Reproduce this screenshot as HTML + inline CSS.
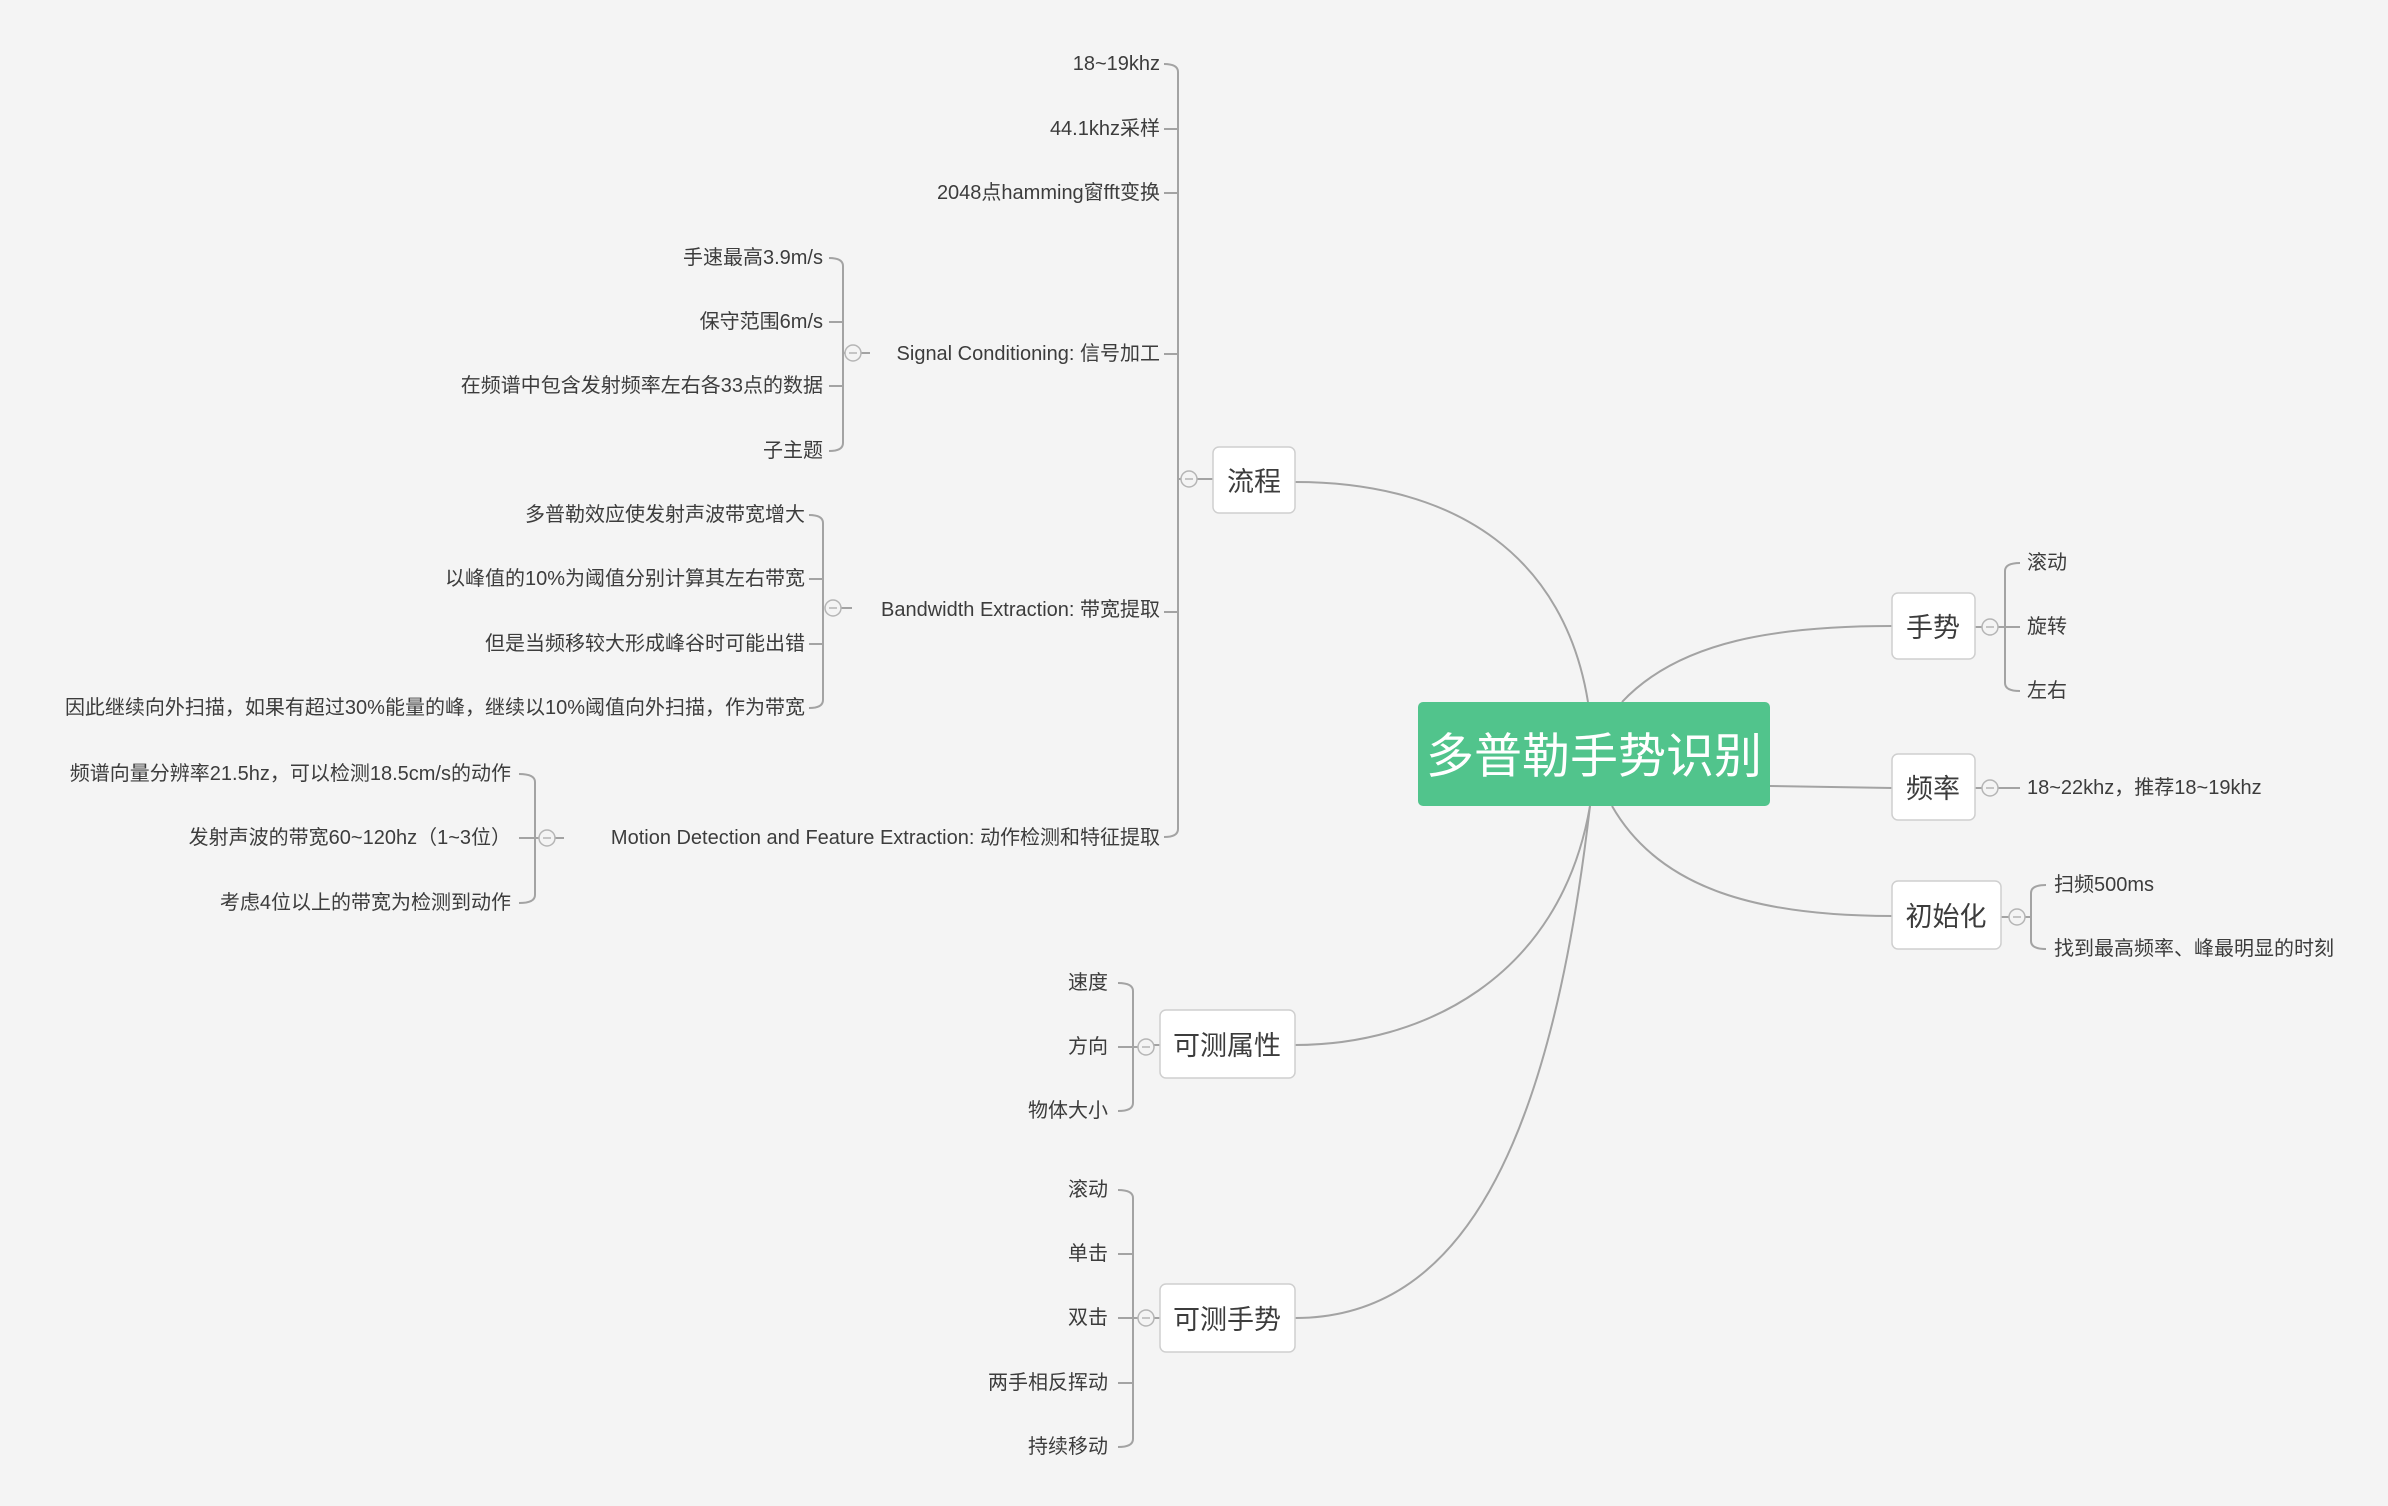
<!DOCTYPE html>
<html><head><meta charset="utf-8"><style>
html,body{margin:0;padding:0;background:#f4f4f4;}
svg{display:block;}
text{font-family:"Liberation Sans","Noto Sans CJK SC",sans-serif;fill:#3c3c3c;dominant-baseline:central;}
.l{font-size:20px;}
.n{font-size:27px;}
</style></head><body>
<svg width="2388" height="1506" viewBox="0 0 2388 1506" xmlns="http://www.w3.org/2000/svg">
<rect width="2388" height="1506" fill="#f4f4f4"/>
<g fill="none" stroke="#a3a3a3" stroke-width="2">
<!-- curves from root -->
<path d="M1295 482 C1460 482 1565 560 1588 702"/>
<path d="M1622 702 C1680 640 1780 626 1892 626"/>
<path d="M1770 786 L1892 788"/>
<path d="M1612 806 C1660 890 1760 916 1892 916"/>
<path d="M1590 806 C1560 980 1420 1045 1295 1045"/>
<path d="M1590 806 C1550 1150 1460 1318 1295 1318"/>
<!-- main 流程 bracket -->
<path d="M1164 64 Q1178 64 1178 72 L1178 829 Q1178 837 1164 837"/>
<path d="M1164 129 L1178 129 M1164 193 L1178 193 M1164 354 L1178 354 M1164 612 L1178 612"/>
<path d="M1178 479 L1181 479 M1197 479 L1213 479"/>
<!-- signal -->
<path d="M829 258 Q843 258 843 266 L843 443 Q843 451 829 451"/>
<path d="M829 322 L843 322 M829 386 L843 386 M843 353 L845 353 M861 353 L870 353"/>
<!-- bandwidth -->
<path d="M809 515 Q823 515 823 523 L823 700 Q823 708 809 708"/>
<path d="M809 579 L823 579 M809 644 L823 644 M841 608 L852 608"/>
<!-- motion -->
<path d="M519 774 Q535 774 535 782 L535 895 Q535 903 519 903"/>
<path d="M519 838 L539 838 M555 838 L564 838"/>
<!-- 可测属性 -->
<path d="M1118 983 Q1133 983 1133 991 L1133 1103 Q1133 1111 1118 1111"/>
<path d="M1118 1047 L1138 1047 M1154 1045 L1160 1045"/>
<!-- 可测手势 -->
<path d="M1118 1190 Q1133 1190 1133 1198 L1133 1439 Q1133 1447 1118 1447"/>
<path d="M1118 1254 L1133 1254 M1118 1318 L1138 1318 M1154 1318 L1160 1318 M1118 1383 L1133 1383"/>
<!-- 手势 -->
<path d="M2020 563 Q2005 563 2005 571 L2005 683 Q2005 691 2020 691"/>
<path d="M1975 627 L1982 627 M1998 627 L2020 627"/>
<!-- 频率 -->
<path d="M1975 788 L1982 788 M1998 788 L2020 788"/>
<!-- 初始化 -->
<path d="M2046 885 Q2031 885 2031 893 L2031 941 Q2031 949 2046 949"/>
<path d="M2001 917 L2009 917 M2025 917 L2031 917"/>
</g>
<!-- collapse circles -->
<g fill="#f4f4f4" stroke="#b5b5b5" stroke-width="1.5">
<circle cx="1189" cy="479" r="8"/><circle cx="853" cy="353" r="8"/><circle cx="833" cy="608" r="8"/>
<circle cx="547" cy="838" r="8"/><circle cx="1146" cy="1047" r="8"/><circle cx="1146" cy="1318" r="8"/>
<circle cx="1990" cy="627" r="8"/><circle cx="1990" cy="788" r="8"/><circle cx="2017" cy="917" r="8"/>
</g>
<g stroke="#b5b5b5" stroke-width="1.5">
<path d="M1185 479h8M849 353h8M829 608h8M543 838h8M1142 1047h8M1142 1318h8M1986 627h8M1986 788h8M2013 917h8"/>
</g>
<!-- boxes -->
<g fill="#ffffff" stroke="#cfcfcf" stroke-width="1.5">
<rect x="1213" y="447" width="82" height="66" rx="6"/>
<rect x="1892" y="593" width="83" height="66" rx="6"/>
<rect x="1892" y="754" width="83" height="66" rx="6"/>
<rect x="1892" y="881" width="109" height="68" rx="6"/>
<rect x="1160" y="1010" width="135" height="68" rx="6"/>
<rect x="1160" y="1284" width="135" height="68" rx="6"/>
</g>
<rect x="1418" y="702" width="352" height="104" rx="5" fill="#51c48c"/>
<text x="1594" y="757" text-anchor="middle" style="font-size:48px;fill:#ffffff">多普勒手势识别</text>
<g class="n" text-anchor="middle">
<text x="1254" y="482">流程</text>
<text x="1933" y="628">手势</text>
<text x="1933" y="789">频率</text>
<text x="1946" y="917">初始化</text>
<text x="1227" y="1046">可测属性</text>
<text x="1227" y="1320">可测手势</text>
</g>
<g class="l" text-anchor="end">
<text x="1160" y="64">18~19khz</text>
<text x="1160" y="129">44.1khz采样</text>
<text x="1160" y="193">2048点hamming窗fft变换</text>
<text x="1160" y="354">Signal Conditioning: 信号加工</text>
<text x="1160" y="610">Bandwidth Extraction: 带宽提取</text>
<text x="1160" y="838">Motion Detection and Feature Extraction: 动作检测和特征提取</text>
<text x="823" y="258">手速最高3.9m/s</text>
<text x="823" y="322">保守范围6m/s</text>
<text x="823" y="386">在频谱中包含发射频率左右各33点的数据</text>
<text x="823" y="451">子主题</text>
<text x="805" y="515">多普勒效应使发射声波带宽增大</text>
<text x="805" y="579">以峰值的10%为阈值分别计算其左右带宽</text>
<text x="805" y="644">但是当频移较大形成峰谷时可能出错</text>
<text x="805" y="708">因此继续向外扫描，如果有超过30%能量的峰，继续以10%阈值向外扫描，作为带宽</text>
<text x="511" y="774">频谱向量分辨率21.5hz，可以检测18.5cm/s的动作</text>
<text x="511" y="838">发射声波的带宽60~120hz（1~3位）</text>
<text x="511" y="903">考虑4位以上的带宽为检测到动作</text>
<text x="1108" y="983">速度</text>
<text x="1108" y="1047">方向</text>
<text x="1108" y="1111">物体大小</text>
<text x="1108" y="1190">滚动</text>
<text x="1108" y="1254">单击</text>
<text x="1108" y="1318">双击</text>
<text x="1108" y="1383">两手相反挥动</text>
<text x="1108" y="1447">持续移动</text>
</g>
<g class="l">
<text x="2027" y="563">滚动</text>
<text x="2027" y="627">旋转</text>
<text x="2027" y="691">左右</text>
<text x="2027" y="788">18~22khz，推荐18~19khz</text>
<text x="2054" y="885">扫频500ms</text>
<text x="2054" y="949">找到最高频率、峰最明显的时刻</text>
</g>
</svg>
</body></html>
